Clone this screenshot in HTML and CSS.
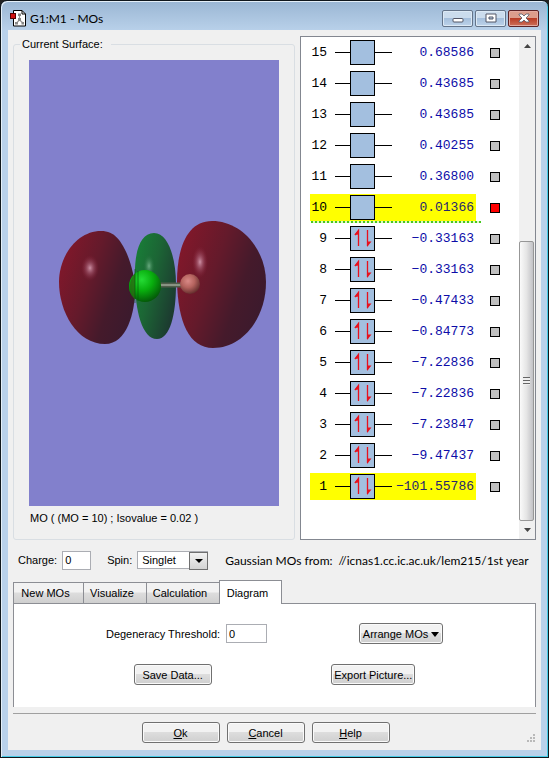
FILE: index.html
```html
<!DOCTYPE html>
<html lang="en">
<head>
    <meta charset="UTF-8">
    <meta name="viewport" content="width=device-width, initial-scale=1.0">
    <title>G1:M1 - MOs</title>
    <link rel="stylesheet" href="styles.css">
</head>
<body>
    <!-- shared orbital symbols -->
    <svg class="defs" width="0" height="0" aria-hidden="true">
        <symbol id="empty" viewBox="0 0 57 25">
            <path d="M0 12.5H57" stroke="#000"/>
            <rect x="15.5" y="0.5" width="24" height="24" fill="#a3bfdf" stroke="#000"/>
        </symbol>
        <symbol id="full" viewBox="0 0 57 25">
            <path d="M0 12.5H57" stroke="#000"/>
            <rect x="15.5" y="0.5" width="24" height="24" fill="#a3bfdf" stroke="#000"/>
            <path d="M23.5 20V4.500L20 9M32.500 4V20" fill="none" stroke="#e8101c" stroke-width="1.300"/>
            <path d="M24 3.500V8.500L19.500 9ZM32 21V15.500H36.500Z" fill="#e8101c"/>
        </symbol>
    </svg>

    <div class="window">
        <header class="titlebar">
            <svg class="app-icon" width="17" height="17" viewBox="0 0 17 17">
                <path d="M3.500 .5H12L15.500 4V16H3.500Z" fill="#fff" stroke="#000"/>
                <path d="M12 .5V4H15.500" fill="none" stroke="#000"/>
                <path d="M9.500 5V10L6.500 13M9.500 10L13 13" fill="none" stroke="#999" stroke-width="1.200"/>
                <path d="M8 3.500H11V6H8ZM8 8H11V11H8ZM5 12H8V14.500H5ZM11.500 12H14V14.500H11.500Z" fill="#888"/>
                <rect x=".5" y="3.500" width="5" height="5" fill="#d01010" stroke="#500"/>
            </svg>
            <h1>G1:M1 - MOs</h1>
            <div class="window-buttons">
                <button type="button" aria-label="Minimize">
                    <svg width="12" height="10" viewBox="0 0 12 10"><rect x="1" y="5.500" width="10" height="3.500" rx="1" fill="#fff" stroke="#535666"/></svg>
                </button>
                <button type="button" aria-label="Maximize">
                    <svg width="12" height="10" viewBox="0 0 12 10"><path d="M1 1H11V9H1ZM4 4V6H8V4Z" fill="#fff" stroke="#535666" fill-rule="evenodd"/></svg>
                </button>
                <button type="button" class="close" aria-label="Close">
                    <svg width="12" height="10" viewBox="0 0 12 10"><path d="M1 1H4L6 3L8 1H11V2L8 5L11 8V9H8L6 7L4 9H1V8L4 5L1 2Z" fill="#fff" stroke="#535666" stroke-width=".8"/></svg>
                </button>
            </div>
        </header>

        <main class="content">
            <div class="top">
                <fieldset class="surface">
                    <legend>Current Surface:</legend>
                    <div class="view">
                        <svg viewBox="0 0 250 446" role="img" aria-label="Molecular orbital surface">
                            <defs>
                                <linearGradient id="red" x1="0" y1="0.1" x2="1" y2="0.6">
                                    <stop offset="0" stop-color="#87172a"/>
                                    <stop offset="0.45" stop-color="#641a2b"/>
                                    <stop offset="0.75" stop-color="#451a2b"/>
                                    <stop offset="1" stop-color="#3c1a2d"/>
                                </linearGradient>
                                <linearGradient id="green" x1="0" y1="0" x2="1" y2="0.6">
                                    <stop offset="0" stop-color="#188238"/>
                                    <stop offset="0.5" stop-color="#1c6535"/>
                                    <stop offset="1" stop-color="#1c3b30"/>
                                </linearGradient>
                                <radialGradient id="chlorine" cx="0.4" cy="0.3" r="0.7">
                                    <stop offset="0" stop-color="#25dc35"/>
                                    <stop offset="0.5" stop-color="#08ad0d"/>
                                    <stop offset="1" stop-color="#045b08"/>
                                </radialGradient>
                                <radialGradient id="hydrogen" cx="0.4" cy="0.35" r="0.65">
                                    <stop offset="0" stop-color="#d98986"/>
                                    <stop offset="0.5" stop-color="#b5645f"/>
                                    <stop offset="1" stop-color="#67302f"/>
                                </radialGradient>
                                <radialGradient id="shine">
                                    <stop offset="0" stop-color="#d8a0b4" stop-opacity="0.9"/>
                                    <stop offset="0.4" stop-color="#b86f86" stop-opacity="0.5"/>
                                    <stop offset="1" stop-color="#8a2038" stop-opacity="0"/>
                                </radialGradient>
                                <radialGradient id="glow">
                                    <stop offset="0" stop-color="#8cc8a2" stop-opacity="0.7"/>
                                    <stop offset="1" stop-color="#1c6535" stop-opacity="0"/>
                                </radialGradient>
                            </defs>
                            <path fill="url(#red)" d="M72 171C86 171 92 181 98 194C103 206 106 220 106 230C106 252 98 284 76 284C48 284 30 252 30 222C30 196 48 171 72 171Z"/>
                            <ellipse cx="61" cy="208" rx="9" ry="13" fill="url(#shine)"/>
                            <circle cx="114" cy="227" r="14" fill="#287018"/>
                            <path fill="url(#green)" d="M125 173C140 173 147 200 147 224C147 255 141 279 128 279C113 279 106 250 106 220C105 195 110 173 125 173Z"/>
                            <ellipse cx="120" cy="206" rx="6" ry="12" fill="url(#glow)"/>
                            <path fill="url(#red)" d="M183 161C213 161 237 190 237 222C237 258 214 288 184 288C160 288 149 262 148 222C148 188 158 161 183 161Z"/>
                            <ellipse cx="171" cy="202" rx="8" ry="16" fill="url(#shine)"/>
                            <path d="M131 225H154" stroke="#505d4b" stroke-width="5"/>
                            <path d="M131 225H154" stroke="#899383" stroke-width="2"/>
                            <circle cx="116" cy="226" r="16" fill="url(#chlorine)"/>
                            <path d="M106 213Q96 226 106 240Z" fill="#2c6614" opacity=".75"/>
                            <path d="M106 209V243M109 211V241" stroke="#07520d" stroke-width="1" opacity=".6"/>
                            <circle cx="161" cy="224" r="10" fill="url(#hydrogen)"/>
                        </svg>
                    </div>
                    <p class="caption">MO ( (MO = 10) ; Isovalue = 0.02 )</p>
                </fieldset>

                <section class="levels" aria-label="Orbital energies">
                    <table>
                        <tbody>
                            <tr><th scope="row">15</th><td><svg class="orbital"><use href="#empty"/></svg></td><td class="energy">0.68586</td><td class="pick"><input type="checkbox" aria-label="MO 15"></td></tr>
                            <tr><th scope="row">14</th><td><svg class="orbital"><use href="#empty"/></svg></td><td class="energy">0.43685</td><td class="pick"><input type="checkbox" aria-label="MO 14"></td></tr>
                            <tr><th scope="row">13</th><td><svg class="orbital"><use href="#empty"/></svg></td><td class="energy">0.43685</td><td class="pick"><input type="checkbox" aria-label="MO 13"></td></tr>
                            <tr><th scope="row">12</th><td><svg class="orbital"><use href="#empty"/></svg></td><td class="energy">0.40255</td><td class="pick"><input type="checkbox" aria-label="MO 12"></td></tr>
                            <tr><th scope="row">11</th><td><svg class="orbital"><use href="#empty"/></svg></td><td class="energy">0.36800</td><td class="pick"><input type="checkbox" aria-label="MO 11"></td></tr>
                            <tr class="selected lumo"><th scope="row">10</th><td><svg class="orbital"><use href="#empty"/></svg></td><td class="energy">0.01366</td><td class="pick"><input type="checkbox" aria-label="MO 10" checked></td></tr>
                            <tr><th scope="row">9</th><td><svg class="orbital"><use href="#full"/></svg></td><td class="energy">−0.33163</td><td class="pick"><input type="checkbox" aria-label="MO 9"></td></tr>
                            <tr><th scope="row">8</th><td><svg class="orbital"><use href="#full"/></svg></td><td class="energy">−0.33163</td><td class="pick"><input type="checkbox" aria-label="MO 8"></td></tr>
                            <tr><th scope="row">7</th><td><svg class="orbital"><use href="#full"/></svg></td><td class="energy">−0.47433</td><td class="pick"><input type="checkbox" aria-label="MO 7"></td></tr>
                            <tr><th scope="row">6</th><td><svg class="orbital"><use href="#full"/></svg></td><td class="energy">−0.84773</td><td class="pick"><input type="checkbox" aria-label="MO 6"></td></tr>
                            <tr><th scope="row">5</th><td><svg class="orbital"><use href="#full"/></svg></td><td class="energy">−7.22836</td><td class="pick"><input type="checkbox" aria-label="MO 5"></td></tr>
                            <tr><th scope="row">4</th><td><svg class="orbital"><use href="#full"/></svg></td><td class="energy">−7.22836</td><td class="pick"><input type="checkbox" aria-label="MO 4"></td></tr>
                            <tr><th scope="row">3</th><td><svg class="orbital"><use href="#full"/></svg></td><td class="energy">−7.23847</td><td class="pick"><input type="checkbox" aria-label="MO 3"></td></tr>
                            <tr><th scope="row">2</th><td><svg class="orbital"><use href="#full"/></svg></td><td class="energy">−9.47437</td><td class="pick"><input type="checkbox" aria-label="MO 2"></td></tr>
                            <tr class="selected"><th scope="row">1</th><td><svg class="orbital"><use href="#full"/></svg></td><td class="energy">−101.55786</td><td class="pick"><input type="checkbox" aria-label="MO 1"></td></tr>
                        </tbody>
                    </table>
                    <div class="scrollbar">
                        <button type="button" aria-label="Scroll up"><svg width="7" height="4" viewBox="0 0 7 4"><path d="M0 4L3.500 0L7 4Z" fill="#444"/></svg></button>
                        <div class="track"></div>
                        <div class="thumb"><span class="grip"></span></div>
                        <button type="button" aria-label="Scroll down"><svg width="7" height="4" viewBox="0 0 7 4"><path d="M0 0L3.500 4L7 0Z" fill="#444"/></svg></button>
                    </div>
                </section>
            </div>

            <div class="settings">
                <label for="charge">Charge:</label>
                <input type="text" id="charge" class="charge" value="0">
                <label for="spin">Spin:</label>
                <span class="select">
                    <select id="spin">
                        <option>Singlet</option>
                        <option>Triplet</option>
                    </select>
                </span>
                <p class="source"><span>Gaussian MOs from:</span><span>//icnas1.cc.ic.ac.uk/lem215/1st year</span></p>
            </div>

            <div class="tabs" role="tablist">
                <button type="button" role="tab" class="tab-new">New MOs</button>
                <button type="button" role="tab" class="tab-visualize">Visualize</button>
                <button type="button" role="tab" class="tab-calculation">Calculation</button>
                <button type="button" role="tab" class="active" aria-selected="true">Diagram</button>
            </div>
            <div class="panel" role="tabpanel">
                <div class="panel-row">
                    <div class="threshold">
                        <label for="threshold">Degeneracy Threshold:</label>
                        <input type="text" id="threshold" value="0">
                    </div>
                    <button type="button" class="btn wide">Arrange MOs
                        <svg width="8" height="5" viewBox="0 0 8 5"><path d="M0 0H8L4 5Z"/></svg>
                    </button>
                </div>
                <div class="panel-row">
                    <button type="button" class="btn">Save Data...</button>
                    <button type="button" class="btn wide">Export Picture...</button>
                </div>
            </div>

            <footer class="actions">
                <button type="button" class="btn"><u>O</u>k</button>
                <button type="button" class="btn"><u>C</u>ancel</button>
                <button type="button" class="btn"><u>H</u>elp</button>
                <svg class="resize" width="9" height="9" viewBox="0 0 9 9"><path d="M6 0H8V2H6ZM3 3H5V5H3ZM6 3H8V5H6ZM0 6H2V8H0ZM3 6H5V8H3ZM6 6H8V8H6Z" fill="#b9b9b9"/></svg>
            </footer>
        </main>
    </div>
</body>
</html>
```
FILE: styles.css
```css
* {
    box-sizing: border-box;
}
body {
    margin: 0;
    font-family: "Liberation Sans", Arial, sans-serif;
    font-size: 11px;
    color: #000;
    background: #222;
}
button, input, select {
    font: inherit;
    color: inherit;
    margin: 0;
    padding: 0;
}
p {
    margin: 0;
}
.defs {
    position: absolute;
}
.window {
    display: flex;
    flex-direction: column;
    min-height: 100vh;
    padding: 0 7px 7px;
    border: 1px solid #10171c;
    border-radius: 7px 7px 0 0;
    background: linear-gradient(#9ab6d3, #b9d1ea 30px);
    box-shadow: inset 1px 1px #e4eff8, inset -1px -1px #45cbe6;
}

/* title bar */
.titlebar {
    display: flex;
    align-items: center;
    height: 29px;
    padding: 5px 2px 0;
}
.titlebar h1 {
    flex: 1;
    margin: 0 0 0 3px;
    font: 12px Lato, "Open Sans", sans-serif;
}
.window-buttons {
    display: flex;
    gap: 2px;
}
.window-buttons button {
    display: flex;
    align-items: center;
    justify-content: center;
    width: 31px;
    height: 17px;
    border: 1px solid #64748a;
    border-radius: 2px;
    background: linear-gradient(#cbdced 45%, #a5bfdc 50%, #bdd3ea);
    box-shadow: inset 0 0 0 1px #dce9f5;
}
.window-buttons .close {
    border-color: #5c2326;
    background: linear-gradient(#dc9d8c 45%, #b93d26 50%, #cc705a);
    box-shadow: inset 0 0 0 1px #e3aaa0;
}

.content {
    flex: 1;
    display: flex;
    flex-direction: column;
    padding: 6px 5px 7px;
    background: #f0f0f0;
}
.top {
    flex: 1;
    display: grid;
    grid-template-columns: 1fr 236px;
    gap: 5px;
}

/* surface view */
.surface {
    display: flex;
    flex-direction: column;
    min-width: 0;
    margin: 0;
    padding: 7px 15px 0;
    border: 1px solid #d9dee3;
    border-radius: 3px;
}
.surface legend {
    margin-left: -9px;
    padding: 0 8px 0 2px;
    line-height: 17px;
}
.view {
    flex: 1;
    display: flex;
    justify-content: center;
    background: #8280cc;
}
.view svg {
    width: 100%;
    max-width: 300px;
}
.caption {
    height: 33px;
    padding-left: 1px;
    line-height: 24px;
}

/* orbital energies */
.levels {
    display: flex;
    align-items: flex-start;
    justify-content: space-between;
    padding-left: 9px;
    border: 1px solid #838790;
    background: #fff;
}
.levels table {
    margin-top: -2px;
    border-spacing: 0 4px;
    font: 13px "Liberation Mono", monospace;
}
.levels th, .levels td {
    height: 27px;
    padding: 0;
    line-height: 25px;
}
.levels th {
    position: relative;
    width: 25px;
    padding-right: 8px;
    font-weight: normal;
    text-align: right;
}
.orbital {
    display: block;
    width: 57px;
    height: 25px;
}
.levels .energy {
    width: 84px;
    padding-right: 2px;
    text-align: right;
    color: #0c0ca8;
}
.levels .pick {
    width: 24px;
    padding-left: 14px;
}
.pick input {
    display: block;
    appearance: none;
    width: 10px;
    height: 10px;
    border: 1px solid #000;
    background: #c0c0c0;
}
.pick input:checked {
    background: #f00;
}
.selected th, .selected td:not(.pick) {
    background: #ff0;
}
.selected .energy {
    color: #26266e;
}
/* border between filled and empty levels */
.lumo th::after {
    content: "";
    position: absolute;
    z-index: 1;
    left: 1px;
    bottom: -2px;
    width: 170px;
    height: 2px;
    background: repeating-linear-gradient(90deg, #47c81f 0 2px, #e4f6c8 2px 4px);
}
.scrollbar {
    align-self: stretch;
    display: flex;
    flex-direction: column;
    width: 16px;
    background: #f0f0f0;
}
.scrollbar button {
    display: flex;
    align-items: center;
    justify-content: center;
    height: 18px;
    border: 0;
    background: none;
}
.track {
    flex: 187;
}
.thumb {
    flex: 280;
    display: flex;
    align-items: center;
    justify-content: center;
    margin-right: 1px;
    border: 1px solid #979797;
    border-radius: 2px;
    background: linear-gradient(90deg, #fafafa, #e5e5e5 50%, #c2c2c6);
}
.grip {
    width: 7px;
    height: 8px;
    background: repeating-linear-gradient(#666 0 1px, #eee 1px 3px);
}

/* charge and spin */
input[type="text"] {
    height: 19px;
    padding: 0 2px;
    border: 1px solid #abadb3;
    background: #fff;
}
.settings {
    display: flex;
    align-items: center;
    height: 40px;
    padding-left: 5px;
}
.settings label {
    margin-right: 5px;
}
.settings .charge {
    width: 29px;
    margin-right: 16px;
}
.select {
    position: relative;
    flex: none;
    width: 71px;
}
.select select {
    appearance: none;
    display: block;
    width: 100%;
    height: 18px;
    padding-left: 4px;
    border: 1px solid #abadb3;
    border-radius: 0;
    background: #fff;
}
.select::before {
    content: "";
    position: absolute;
    top: 1px;
    right: 0;
    width: 17px;
    height: 16px;
    border: 1px solid #707070;
    background: linear-gradient(#f2f2f2, #d4d4d4);
    pointer-events: none;
}
.select::after {
    content: "";
    position: absolute;
    top: 8px;
    right: 5px;
    border: 4px solid transparent;
    border-top-color: #000;
    border-bottom: 0;
    pointer-events: none;
}
.source {
    display: flex;
    gap: 6px;
    margin-left: 17px;
    font: 12px Lato, "Open Sans", sans-serif;
    white-space: nowrap;
}

/* tabs */
.tabs {
    display: flex;
    align-items: flex-end;
    height: 24px;
}
.tabs button {
    width: 70px;
    height: 22px;
    border: 1px solid #8c8e94;
    border-right-width: 0;
    background: linear-gradient(#f2f2f2 45%, #dddddd 50%, #cfcfcf);
}
.tabs .tab-new {
    padding-right: 6px;
}
.tabs .tab-visualize {
    width: 63px;
    padding-right: 6px;
}
.tabs .tab-calculation {
    width: 73px;
    padding-right: 6px;
}
.tabs .active {
    position: relative;
    width: 63px;
    height: 24px;
    padding-right: 6px;
    border-right-width: 1px;
    border-bottom: 0;
    background: #fff;
}
.panel {
    display: flex;
    flex-direction: column;
    gap: 20px;
    height: 104px;
    margin-top: -1px;
    padding-top: 19px;
    border: 1px solid #8c8e94;
    border-bottom: 0;
    background: #fff;
}
.panel-row {
    display: flex;
    align-items: center;
    justify-content: space-evenly;
    height: 21px;
}
.threshold {
    display: flex;
    align-items: center;
    gap: 6px;
}
.threshold input {
    width: 41px;
}
.btn {
    width: 78px;
    height: 21px;
    border: 1px solid #707070;
    border-radius: 3px;
    background: linear-gradient(#f2f2f2 45%, #dddddd 50%, #cfcfcf);
    box-shadow: inset 0 0 0 1px #fafafa;
}
.btn.wide {
    width: 84px;
    white-space: nowrap;
}
.btn svg {
    vertical-align: 1px;
}

/* bottom buttons */
.actions {
    position: relative;
    display: flex;
    justify-content: center;
    gap: 7px;
    margin-top: 6px;
    padding: 8px 18px 0 0;
    border-top: 1px solid #a0a0a0;
}
.resize {
    position: absolute;
    right: 0;
    bottom: 0;
}
```
